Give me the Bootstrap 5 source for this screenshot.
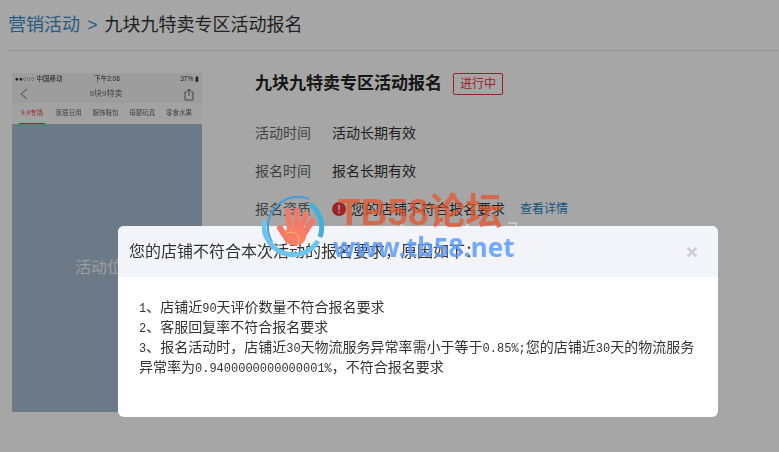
<!DOCTYPE html>
<html lang="zh-CN">
<head>
    <meta charset="UTF-8" />
    <meta name="viewport" content="width=device-width, initial-scale=1" />
    <title>九块九特卖专区活动报名</title>
    <link href="https://cdn.jsdelivr.net/npm/bootstrap@5.3.3/dist/css/bootstrap.min.css" rel="stylesheet" />
    <style>
        html, body { height: 452px; overflow: hidden; }
        body {
            font-family: "Liberation Sans", "Noto Sans CJK SC", sans-serif;
            font-size: 14px;
            color: #333;
            background: #fff;
            padding: 0 0 0 8px;
        }
        .page-head { height: 51px; border-bottom: 1px solid #e4e4e4; font-size: 18px; line-height: 50px; gap: 7px; }
        .page-head a { color: #3c8dc8; text-decoration: none; }
        .head-sep { color: #3c8dc8; }
        .page-main { padding: 22px 0 0 4px; }
        .phone-shot { width: 190px; height: 339px; background: #a6bad0; flex: none; }
        .phone-top { background: #f2f2f2; filter: blur(.35px); }
        .status-bar { height: 12px; font-size: 6.5px; line-height: 12px; padding: 0 3px; color: #333; }
        .status-bar > span { flex: 1; }
        .phone-nav { height: 18px; padding: 0 8px; color: #666; }
        .phone-nav-title { font-size: 8px; }
        .phone-tabs { height: 21px; background: #f9f9f9; font-size: 6.5px; padding: 0 10px 0 7px; color: #666; }
        .phone-tab { height: 100%; line-height: 19px; width: 26px; text-align: center; }
        .phone-tab.is-on { color: #e03c46; border-bottom: 1px solid #e03c46; }
        .slot-text { font-size: 16px; color: #f4f4f4; padding: 132px 0 0 63px; }
        .info-col { padding: 0 0 0 53px; }
        .info-head { height: 22px; margin-bottom: 19px; }
        .info-title { font-size: 17px; font-weight: 700; line-height: 22px; margin: 0; color: #222; }
        .state-tag { width: 50px; height: 22px; border: 1px solid #e8373d; border-radius: 2px; color: #e8373d; font-size: 12px; line-height: 20px; text-align: center; margin-left: 11px; }
        .info-row { height: 38px; line-height: 38px; }
        .info-label { width: 77px; color: #666; }
        .warn-dot { width: 14px; height: 14px; border-radius: 50%; background: #f0383f; color: #fff; font-size: 11px; font-weight: 700; line-height: 14px; text-align: center; margin-right: 5px; }
        .detail-link { color: #2c7cc0; font-size: 12px; margin-left: 15px; text-decoration: none; }
        .modal-backdrop.show { opacity: .35; }
        .notice-dialog { width: 600px; max-width: 600px; margin: 226px 0 0 118px; }
        .notice-dialog .modal-content { height: 191px; border: 0; border-radius: 6px; }
        .notice-dialog .modal-header { height: 51px; padding: 0 20px 0 11px; background: #f3f4fa; border: 0; border-radius: 6px 6px 0 0; }
        .notice-title { font-size: 16px; font-weight: 400; margin: 0; color: #333; }
        .notice-close { border: 0; background: none; padding: 0; font-size: 21px; font-weight: 700; line-height: 1; color: #c8ccd3; }
        .notice-dialog .modal-body { padding: 20px 21px; font-size: 14px; line-height: 20px; color: #333; }
        .num { font-family: "Liberation Mono", monospace; font-size: 12px; line-height: 1; }
        .site-mark { position: fixed; left: 262px; top: 190px; width: 260px; height: 72px; z-index: 2000; pointer-events: none; }
        .site-mark svg { position: absolute; left: 0; top: 0; }
        .mark-name { position: absolute; left: 76px; top: 3px; font-size: 37px; line-height: 40px; font-weight: 700; color: rgba(232, 82, 42, .72); white-space: nowrap; }
        .mark-url { position: absolute; left: 71px; top: 41px; font-family: "Noto Sans", sans-serif; font-size: 26px; line-height: 32px; font-weight: 700; color: rgba(90, 155, 255, .85); white-space: nowrap; }
    </style>
</head>
<body>
    <div class="page-head d-flex align-items-center">
        <a href="#">营销活动</a>
        <span class="head-sep">&gt;</span>
        <span>九块九特卖专区活动报名</span>
    </div>

    <div class="page-main d-flex">
        <div class="phone-shot">
            <div class="phone-top">
                <div class="status-bar d-flex">
                    <span>●●○○○ 中国移动</span>
                    <span class="text-center">下午2:08</span>
                    <span class="text-end">37% ▮</span>
                </div>
                <div class="phone-nav d-flex align-items-center justify-content-between">
                    <svg width="8" height="12" viewBox="0 0 8 12" fill="none" stroke="#666"><path d="M7 1 1 6l6 5"/></svg>
                    <span class="phone-nav-title">9块9特卖</span>
                    <svg width="10" height="13" viewBox="0 0 10 13" fill="none" stroke="#666"><path d="M3 4H1v8h8V4H7M5 8V1M3 3l2-2 2 2"/></svg>
                </div>
                <div class="phone-tabs d-flex justify-content-between">
                    <div class="phone-tab is-on">9.9专场</div>
                    <div class="phone-tab">家居日用</div>
                    <div class="phone-tab">服饰鞋包</div>
                    <div class="phone-tab">母婴玩具</div>
                    <div class="phone-tab">零食水果</div>
                </div>
            </div>
            <div class="slot-text">活动位置</div>
        </div>

        <div class="info-col">
            <div class="info-head d-flex align-items-center">
                <h1 class="info-title">九块九特卖专区活动报名</h1>
                <div class="state-tag">进行中</div>
            </div>
            <div class="info-row d-flex"><div class="info-label">活动时间</div><div>活动长期有效</div></div>
            <div class="info-row d-flex"><div class="info-label">报名时间</div><div>报名长期有效</div></div>
            <div class="info-row d-flex align-items-center">
                <div class="info-label">报名资质</div>
                <div class="warn-dot">!</div>
                <div>您的店铺不符合报名要求</div>
                <a class="detail-link" href="#">查看详情</a>
            </div>
        </div>
    </div>

    <div class="modal-backdrop show"></div>
    <div class="modal d-block" tabindex="-1">
        <div class="modal-dialog notice-dialog">
            <div class="modal-content">
                <div class="modal-header d-flex justify-content-between">
                    <h5 class="notice-title">您的店铺不符合本次活动的报名要求，原因如下：</h5>
                    <button class="notice-close" type="button" aria-label="Close">×</button>
                </div>
                <div class="modal-body">
                    <div><span class="num">1</span>、店铺近<span class="num">90</span>天评价数量不符合报名要求</div>
                    <div><span class="num">2</span>、客服回复率不符合报名要求</div>
                    <div><span class="num">3</span>、报名活动时，店铺近<span class="num">30</span>天物流服务异常率需小于等于<span class="num">0.85%;</span>您的店铺近<span class="num">30</span>天的物流服务异常率为<span class="num">0.9400000000000001%</span>，不符合报名要求</div>
                </div>
            </div>
        </div>
    </div>

    <div class="site-mark">
        <svg width="260" height="72" viewBox="0 0 260 72" fill="none">
            <path d="M10 52A30 30 0 0 1 47 9" stroke="#4a9ad8" stroke-width="2"/>
            <path d="M48 14A29 29 0 0 1 58 47" stroke="#42b0d8" stroke-width="5"/>
            <path d="M56 51A29 29 0 0 1 5 48 29 29 0 0 1 2 30" stroke="#6cc4ee" stroke-width="5"/>
            <g stroke="#f2796a" stroke-width="6" stroke-linecap="round">
                <path d="M28 40 26 21M34 38l1-17M38 40l6-16M42 44l8-13M26 50 18 38"/>
            </g>
            <ellipse cx="33" cy="46" rx="11" ry="10" fill="#f77f68"/>
            <path d="M25 43c5-2 9 0 11 3 2 3 1 6-1 9" stroke="#f9c06a"/>
            <path d="M246 33h8v3M138 35h3M176 33h4M204 35h3" stroke="#fff" stroke-opacity=".7"/>
        </svg>
        <div class="mark-name">TB58论坛</div>
        <div class="mark-url">www.tb58.net</div>
    </div>

    <script src="https://cdn.jsdelivr.net/npm/bootstrap@5.3.3/dist/js/bootstrap.bundle.min.js"></script>
</body>
</html>
